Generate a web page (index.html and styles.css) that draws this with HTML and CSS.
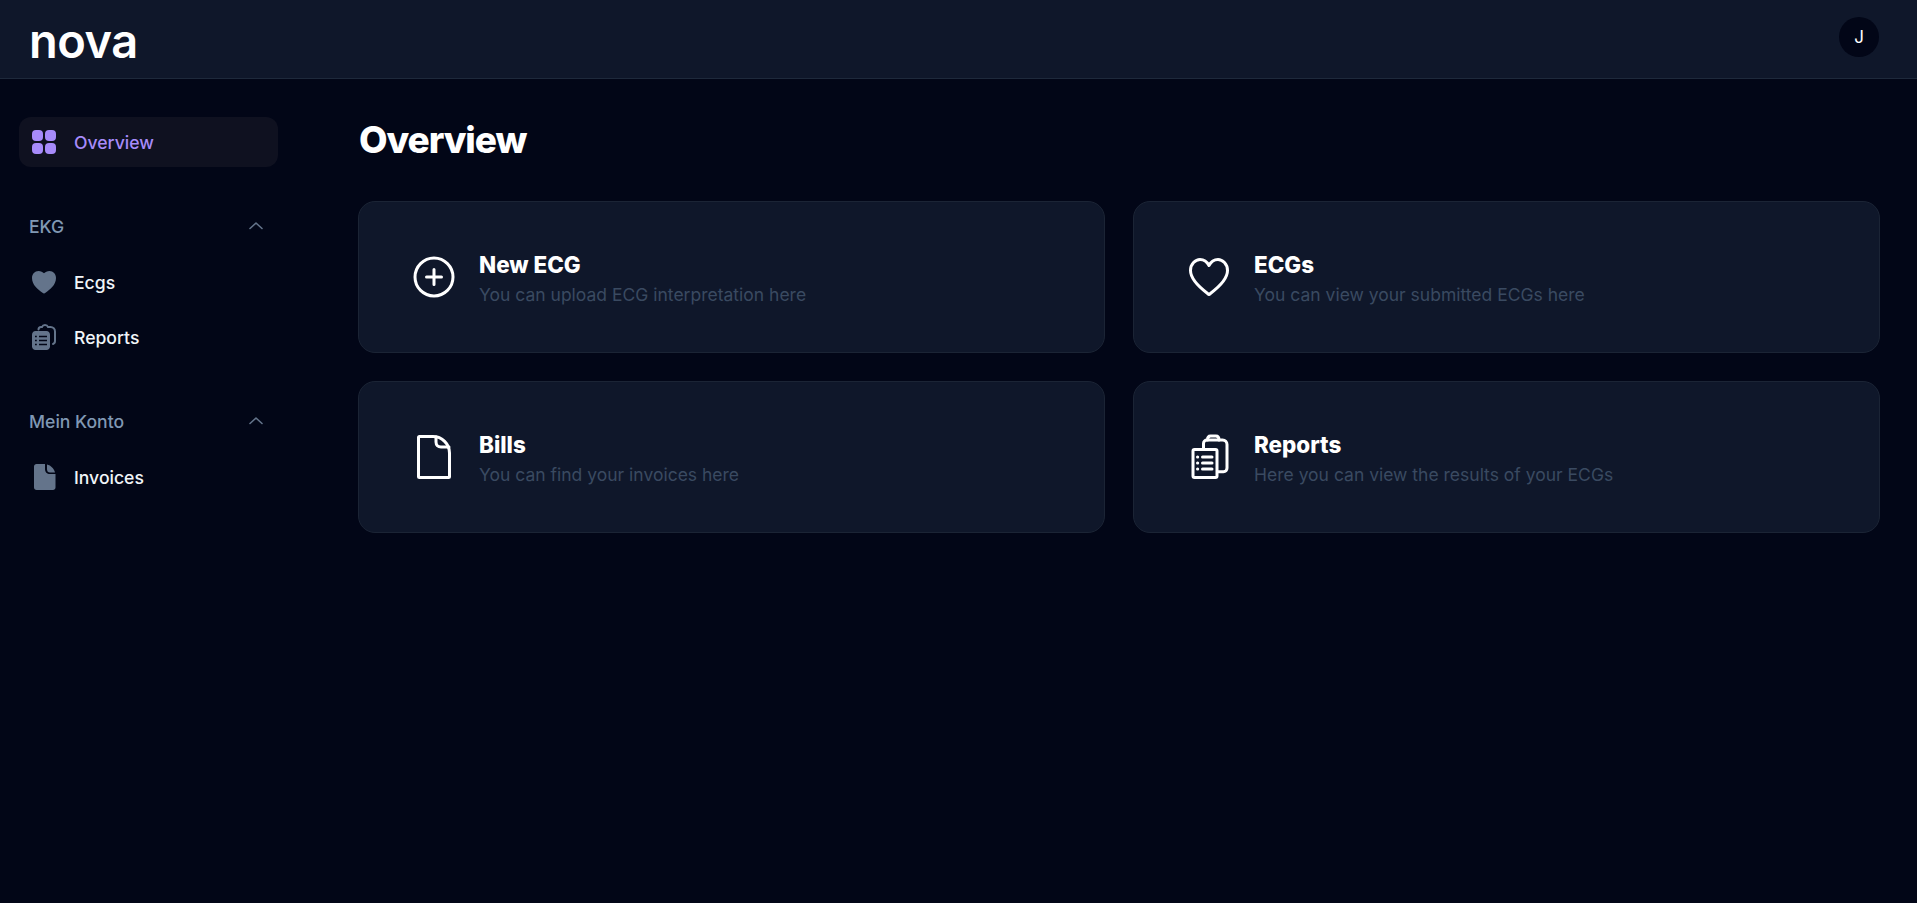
FILE: index.html
```html
<!DOCTYPE html>
<html lang="en">
<head>
    <meta charset="UTF-8">
    <meta name="viewport" content="width=device-width, initial-scale=1.0">
    <title>Nova - Overview</title>
    <link rel="stylesheet" href="styles.css">
</head>
<body>
    <div class="header">
        <div class="logo">nova</div>
        <div class="avatar">J</div>
    </div>
    <div class="layout">
        <div class="sidebar">
            <a class="nav-item nav-active">
                <svg class="nav-icon" viewBox="0 0 24 24" fill="#a78bfa"><rect x="0" y="0" width="11" height="11" rx="4"/><rect x="13" y="0" width="11" height="11" rx="4"/><rect x="0" y="13" width="11" height="11" rx="4"/><rect x="13" y="13" width="11" height="11" rx="4"/></svg>
                <span>Overview</span>
            </a>
            <div class="nav-section">
                <div class="section-title">
                    <span>EKG</span>
                    <svg class="chevron" viewBox="0 0 16 16" fill="none" stroke="#64748b" stroke-width="1.6" stroke-linecap="round" stroke-linejoin="round"><path d="M2 10.5 8 5l6 5.500"/></svg>
                </div>
                <a class="nav-item">
                    <svg class="nav-icon" viewBox="0 0 24 24" fill="#64748b"><path d="M12 23.500C11.500 23.500 11 23.200 10.500 22.800 6 19.500 0 15 0 8 0 3.900 2.800 1 6.500 1 8.800 1 10.800 2 12 3.300 13.200 2 15.200 1 17.500 1 21.200 1 24 3.900 24 8 24 15 18 19.500 13.500 22.800 13 23.200 12.500 23.500 12 23.500Z"/></svg>
                    <span>Ecgs</span>
                </a>
                <a class="nav-item">
                    <svg class="nav-icon nav-icon-tall" viewBox="0 0 24 26"><path fill="none" stroke="#64748b" stroke-width="2" stroke-linecap="round" d="M6.500 5.500C6.500 4 7.500 3 9 3h1C10.500 1.700 11.500 1 13 1s2.500.7 3 2h2.500C21 3 23 5 23 7.500V17c0 1.500-.5 2.500-2 3"/><path fill="#64748b" d="M3.500 7h11C16.400 7 18 8.600 18 10.500v12c0 1.900-1.600 3.500-3.500 3.500h-11C1.600 26 0 24.400 0 22.500v-12C0 8.600 1.600 7 3.500 7Z"/><path stroke="#020617" stroke-width="1.500" d="M7 12.500h8M7 16.500h8M7 20.500h8M3 12.500h1.800M3 16.500h1.800M3 20.500h1.800"/></svg>
                    <span>Reports</span>
                </a>
            </div>
            <div class="nav-section">
                <div class="section-title">
                    <span>Mein Konto</span>
                    <svg class="chevron" viewBox="0 0 16 16" fill="none" stroke="#64748b" stroke-width="1.6" stroke-linecap="round" stroke-linejoin="round"><path d="M2 10.5 8 5l6 5.500"/></svg>
                </div>
                <a class="nav-item">
                    <svg class="nav-icon nav-icon-tall" viewBox="0 0 24 26" fill="#64748b"><path d="M4.500 0H13v5c0 3 2 5 5 5h5.500v13.500c0 1.400-1.100 2.500-2.500 2.500H4.500C3.100 26 2 24.900 2 23.500V2.500C2 1.100 3.100 0 4.500 0Z"/><path d="M15 .500C19 1.500 22 4.500 23 8.500h-5c-2 0-3-1.300-3-3.300Z"/></svg>
                    <span>Invoices</span>
                </a>
            </div>
        </div>
        <div class="main">
            <h1>Overview</h1>
            <div class="cards">
                <div class="card">
                    <svg class="card-icon" viewBox="0 0 48 48" fill="none" stroke="#fff" stroke-width="3" stroke-linecap="round" stroke-linejoin="round"><circle cx="24" cy="24" r="19"/><path d="M24 16.500v15M16.500 24h15"/></svg>
                    <div class="card-body">
                        <div class="card-title">New ECG</div>
                        <div class="card-text">You can upload ECG interpretation here</div>
                    </div>
                </div>
                <div class="card">
                    <svg class="card-icon" viewBox="0 0 48 48" fill="none" stroke="#fff" stroke-width="3" stroke-linecap="round" stroke-linejoin="round"><path d="M24 41.500C19.500 38 5.500 28.500 5.500 17.500 5.500 11 10.500 6.500 15 6.500c3.800 0 7 2.200 9 6C26 8.700 29.200 6.500 33 6.500c4.500 0 9.500 4.500 9.500 11C42.500 28.500 28.500 38 24 41.500Z"/></svg>
                    <div class="card-body">
                        <div class="card-title">ECGs</div>
                        <div class="card-text">You can view your submitted ECGs here</div>
                    </div>
                </div>
                <div class="card">
                    <svg class="card-icon" viewBox="0 0 48 48" fill="none" stroke="#fff" stroke-width="3" stroke-linecap="round" stroke-linejoin="round"><path d="M9.500 3.500h13.500c9 0 16.500 7.500 16.500 16.500v23.500c0 .600-.400 1-1 1H9.500c-.600 0-1-.400-1-1V4.500c0-.600.400-1 1-1Z"/><path d="M26 4v5c0 3 2 5 5 5h8"/></svg>
                    <div class="card-body">
                        <div class="card-title">Bills</div>
                        <div class="card-text">You can find your invoices here</div>
                    </div>
                </div>
                <div class="card">
                    <svg class="card-icon" viewBox="0 0 48 48" fill="none" stroke="#fff" stroke-width="3" stroke-linecap="round" stroke-linejoin="round"><path d="M18.500 15v-4.500c0-2 1.500-3.500 3.500-3.500h15.500c2.700 0 4.500 1.800 4.500 4.500V35c0 2.200-1.500 3.700-3.500 3.700H33"/><path d="M22.500 7c0-3 1.500-4 3-4h5.500c1.500 0 3 1 3 4"/><path d="M9.500 16.500h21c1 0 1.500.500 1.500 1.500v25c0 1-.500 1.500-1.500 1.500h-21c-1 0-1.500-.500-1.500-1.500V18c0-1 .500-1.500 1.500-1.500Z"/><path d="M17.500 24H27M17.500 30H27M17.500 36H27M12.500 24h.2M12.500 30h.2M12.500 36h.2"/></svg>
                    <div class="card-body">
                        <div class="card-title">Reports</div>
                        <div class="card-text">Here you can view the results of your ECGs</div>
                    </div>
                </div>
            </div>
        </div>
    </div>
</body>
</html>
```

FILE: styles.css
```css
* {
    box-sizing: border-box;
}
html, body {
    height: 100%;
}
body {
    margin: 0;
    background-color: #020617;
    color: #fff;
    font-family: Inter, "Liberation Sans", sans-serif;
    overflow: hidden;
}
.header {
    height: 79px;
    padding: 0 38px 0 29px;
    display: flex;
    align-items: center;
    justify-content: space-between;
    background-color: #0f172a;
    border-bottom: 1px solid #1e293b;
}
.logo {
    margin-top: 3px;
    font-size: 47px;
    font-weight: 600;
    letter-spacing: -0.5px;
    line-height: 1;
    color: #fff;
}
.avatar {
    width: 40px;
    height: 40px;
    margin-bottom: 4px;
    border-radius: 50%;
    background-color: #020617;
    display: flex;
    align-items: center;
    justify-content: center;
    font-size: 17px;
}
.layout {
    display: flex;
}
.sidebar {
    width: 297px;
    flex-shrink: 0;
    padding: 38px 19px;
}
.nav-item {
    height: 50px;
    padding: 0 13px;
    display: flex;
    align-items: center;
    gap: 18px;
    border-radius: 12px;
    color: #f1f5f9;
    font-size: 17.6px;
    font-weight: 500;
}
.nav-item + .nav-item {
    margin-top: 5px;
}
.nav-icon {
    width: 24px;
    height: 24px;
    flex-shrink: 0;
}
.nav-icon-tall {
    height: 26px;
}
.nav-active {
    background-color: #0f1120;
    color: #a78bfa;
}
.nav-section {
    margin-top: 29px;
}
.section-title {
    height: 60px;
    margin-bottom: 1px;
    padding: 0 14px 0 10px;
    display: flex;
    align-items: center;
    justify-content: space-between;
    color: #8098b4;
    font-size: 17.6px;
    font-weight: 500;
}
.chevron {
    width: 16px;
    height: 16px;
}
.main {
    flex: 1;
    padding: 30px 37px 0 61px;
}
h1 {
    margin: 0 0 30px 1px;
    font-size: 37px;
    font-weight: 800;
    letter-spacing: -1.1px;
    line-height: 62px;
}
.cards {
    display: grid;
    grid-template-columns: 1fr 1fr;
    gap: 28px;
}
.card {
    height: 152px;
    padding: 0 51px;
    display: flex;
    align-items: center;
    gap: 21px;
    background-color: #0f172a;
    border: 1px solid #1b2435;
    border-radius: 17px;
}
.card-icon {
    width: 48px;
    height: 48px;
    flex-shrink: 0;
}
.card-body {
    padding-top: 6px;
}
.card-title {
    font-size: 22.4px;
    font-weight: 800;
    line-height: 30px;
}
.card-text {
    font-size: 17.5px;
    line-height: 30px;
    color: #3a4a61;
}
```
